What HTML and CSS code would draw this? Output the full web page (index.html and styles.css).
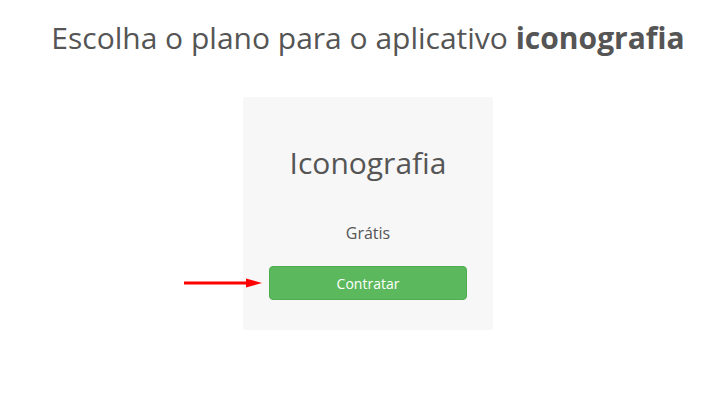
FILE: index.html
```html
<!DOCTYPE html>
<html>
<head>
	<title>Planos</title>
	<link rel="stylesheet" href="styles.css">
</head>
<body>
	<div class="page">
		<h1 class="title">Escolha o plano para o aplicativo <b>iconografia</b></h1>
		<div class="plans">
			<div class="plan">
				<h2 class="plan-name">Iconografia</h2>
				<p class="plan-price">Grátis</p>
				<div class="plan-action">
					<svg class="arrow" width="78" height="12" viewBox="0 0 78 12">
						<line x1="0" y1="6" x2="64" y2="6" stroke="#f00" stroke-width="3"/>
						<polygon points="62,1.5 78,6 62,10.5" fill="#f00"/>
					</svg>
					<button class="btn-buy">Contratar</button>
				</div>
			</div>
		</div>
	</div>
</body>
</html>
```

FILE: styles.css
```css
body {
	margin: 0;
	background: #fff;
	font-family: "Open Sans", sans-serif;
	color: #555;
}

.page {
	padding: 14px 0 0 9px;
	text-align: center;
}

.title {
	margin: 0;
	font-size: 30px;
	font-weight: 400;
	line-height: 48px;
}

.title b {
	font-weight: 700;
}

.plans {
	display: flex;
	justify-content: center;
	margin-top: 35px;
}

.plan {
	width: 250px;
	height: 233px;
	background: #f7f7f7;
	border-radius: 3px;
	box-sizing: border-box;
	padding-top: 44px;
}

.plan-name {
	margin: 0;
	font-size: 30px;
	font-weight: 400;
	line-height: 44px;
}

.plan-price {
	margin: 38px 0 0;
	font-size: 16px;
	line-height: 20px;
}

.plan-action {
	position: relative;
	margin-top: 23px;
}

.arrow {
	position: absolute;
	left: -59px;
	top: 11px;
}

.btn-buy {
	display: block;
	margin: 0 auto;
	width: 198px;
	height: 34px;
	background: #5cb85c;
	border: 1px solid #4cae4c;
	border-radius: 4px;
	color: #fff;
	font-family: "Open Sans", sans-serif;
	font-size: 14px;
}
```
